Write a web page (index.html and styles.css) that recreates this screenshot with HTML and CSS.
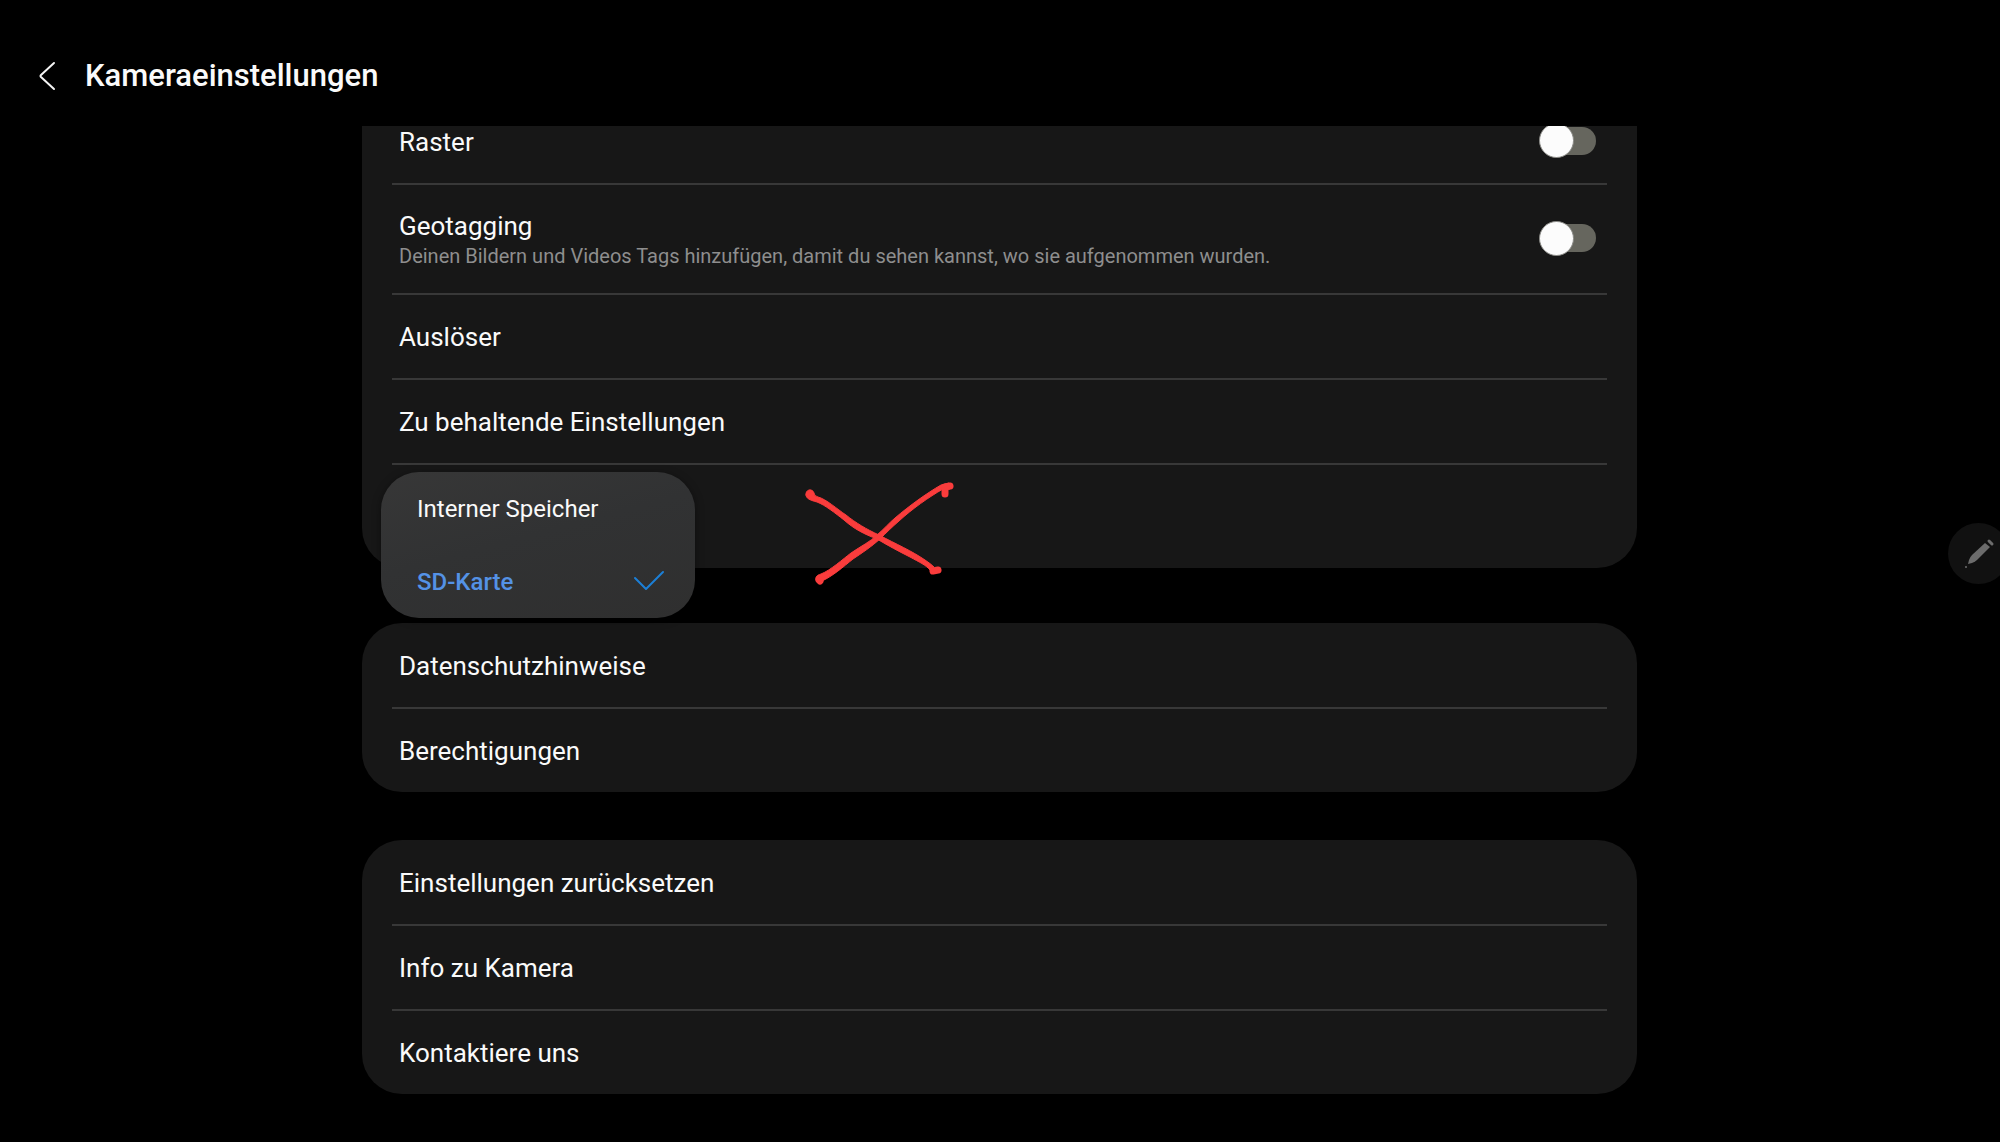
FILE: index.html
```html
<!DOCTYPE html>
<html lang="de">
<head>
  <meta charset="utf-8">
  <meta name="viewport" content="width=device-width, initial-scale=1">
  <title>Kameraeinstellungen</title>
  <link rel="stylesheet" href="styles.css">
</head>
<body>
  <header class="app-bar">
    <button class="back" type="button" aria-label="Zurück">
      <svg width="20" height="32" viewBox="0 0 20 32" fill="none" stroke="#f4f4f4" stroke-width="2" stroke-linecap="round" stroke-linejoin="round"><path d="M17 3 L4 15 Q3 16 4 17 L17 29"/></svg>
    </button>
    <h1 class="title">Kameraeinstellungen</h1>
  </header>

  <main class="settings">
    <section class="card card-scrolled">
      <label class="row" for="raster">
        <span class="label">Raster</span>
        <input class="switch" id="raster" type="checkbox" role="switch">
      </label>
      <label class="row row-tall" for="geotagging">
        <span class="text">
          <span class="label">Geotagging</span>
          <span class="summary">Deinen Bildern und Videos Tags hinzufügen, damit du sehen kannst, wo sie aufgenommen wurden.</span>
        </span>
        <input class="switch" id="geotagging" type="checkbox" role="switch">
      </label>
      <a class="row" href="#ausloeser">Auslöser</a>
      <a class="row" href="#behalten">Zu behaltende Einstellungen</a>
      <div class="row row-storage">
        <div class="popup">
          <button class="option" type="button">Interner Speicher</button>
          <button class="option selected" type="button" aria-pressed="true">SD-Karte
            <svg width="32" height="24" viewBox="0 0 32 24" fill="none" stroke="#1c7fd6" stroke-width="2" stroke-linecap="round" stroke-linejoin="round"><path d="M2 8 L13 19 L30 2"/></svg>
          </button>
        </div>
        <svg class="scribble" width="160" height="110" viewBox="800 478 160 110" fill="#fa3c3c" stroke="#fa3c3c" stroke-linecap="round" stroke-linejoin="round">
          <path stroke-width="1" d="M806 495 A4 4 0 0 1 814 493 Q814 496 818 497 C826 499 837 509 846 515 C856 523 866 529 879 535 C896 544 912 551 925 560 Q931 564 934 567 L930 570 C926 565 919 562 910 557 C900 552 887 545 877 539 C864 534 854 529 844 520 C835 513 825 505 817 502 C809 500 806 498 806 495 Z"/>
          <path stroke-width="1" d="M816 580 C815 577 817 575 821 574 C831 570 843 559 851 553 C861 546 870 542 877 535 C884 529 889 523 895 518 C909 506 927 493 941 485 L949 483 L950 489 L943 489 C929 497 912 509 899 521 C892 527 886 533 880 539 C871 547 862 553 853 559 C843 567 833 576 822 581 Z"/>
          <path fill="none" stroke-width="7" d="M819 580 L820 581 M933 571 L938 570 M945 487 L950 486 M945 490 L945 494"/>
        </svg>
      </div>
    </section>

    <section class="card card-privacy">
      <a class="row" href="#datenschutz">Datenschutzhinweise</a>
      <a class="row" href="#berechtigungen">Berechtigungen</a>
    </section>

    <section class="card card-about">
      <a class="row" href="#reset">Einstellungen zurücksetzen</a>
      <a class="row" href="#info">Info zu Kamera</a>
      <a class="row" href="#kontakt">Kontaktiere uns</a>
    </section>
  </main>

  <button class="pen-handle" type="button" aria-label="Stift">
    <svg width="32" height="32" viewBox="0 0 32 32" fill="#6c6c6c"><path d="M5 26 L6 22 Q7 19 9 17 L22 5 L27 9 L14 22 Q12 24 9 25 Z"/><circle cx="3" cy="29" r="1"/><path d="M26 3 L29 6" stroke="#6c6c6c" stroke-width="3" stroke-linecap="round"/></svg>
  </button>
</body>
</html>
```
FILE: styles.css
```css
* {
  box-sizing: border-box;
}

body {
  position: relative;
  min-height: 100vh;
  margin: 0;
  overflow-x: hidden;
  background: #000;
  color: #fafafa;
  font-family: Roboto, "Liberation Sans", sans-serif;
  font-size: 26px;
  line-height: 32px;
}

button {
  border: 0;
  padding: 0;
  background: none;
  color: inherit;
  font: inherit;
  cursor: pointer;
}

svg {
  display: block;
  flex: none;
}

.app-bar {
  display: flex;
  align-items: center;
  gap: 28px;
  height: 126px;
  padding: 26px 37px 0;
}

.title {
  margin: 0;
  font-size: 31px;
  font-weight: 500;
  line-height: 40px;
}

.settings {
  padding: 0 18.15% 40px 18.1%;
  overflow: hidden;
}

.card {
  padding: 1px 30px 0;
  border-radius: 40px;
  background: #171717;
}

/* The first card is scrolled partly under the app bar. */
.card-scrolled {
  margin-top: -27px;
  border-radius: 0 0 40px 40px;
}

.card-privacy {
  margin-top: 55px;
}

.card-about {
  margin-top: 48px;
}

.row {
  display: flex;
  align-items: center;
  justify-content: space-between;
  min-height: 85px;
  padding: 0 11px 0 7px;
  border-bottom: 2px solid #383838;
  color: inherit;
  text-decoration: none;
}

.row:last-child {
  min-height: 83px;
  border-bottom: 0;
}

.row-tall {
  min-height: 110px;
}

.text {
  display: flex;
  flex-direction: column;
  padding-top: 2px;
}

.summary {
  color: #8e8e8e;
  font-size: 20px;
  line-height: 28px;
}

.switch {
  display: grid;
  flex: none;
  align-items: center;
  width: 57px;
  height: 33px;
  margin: 0 0 4px;
  appearance: none;
}

.switch::before,
.switch::after {
  content: "";
  grid-area: 1 / 1;
}

.switch::before {
  height: 28px;
  margin-left: 3px;
  border-radius: 14px;
  background: #66665e;
}

.switch::after {
  width: 33px;
  height: 33px;
  border: 1px solid #8a8a86;
  border-radius: 50%;
  background: #fcfcfc;
}

.row.row-storage {
  position: relative;
  min-height: 103px;
}

.popup {
  position: absolute;
  z-index: 1;
  top: 7px;
  left: -11px;
  width: 314px;
  border-radius: 38px;
  background: linear-gradient(165deg, #373737, #313233 45%, #2f2f2f);
  box-shadow: 0 2px 10px rgba(0, 0, 0, 0.4);
}

.option {
  display: flex;
  align-items: center;
  justify-content: space-between;
  width: 100%;
  height: 73px;
  padding: 0 30px 0 36px;
  font-size: 24px;
}

.selected {
  color: #5492e6;
  font-weight: 500;
}

.scribble {
  position: absolute;
  z-index: 1;
  top: 13px;
  left: 408px;
}

.pen-handle {
  position: absolute;
  top: 523px;
  right: -9px;
  display: flex;
  align-items: center;
  justify-content: center;
  width: 61px;
  height: 61px;
  border-radius: 50%;
  background: #111;
}
```
